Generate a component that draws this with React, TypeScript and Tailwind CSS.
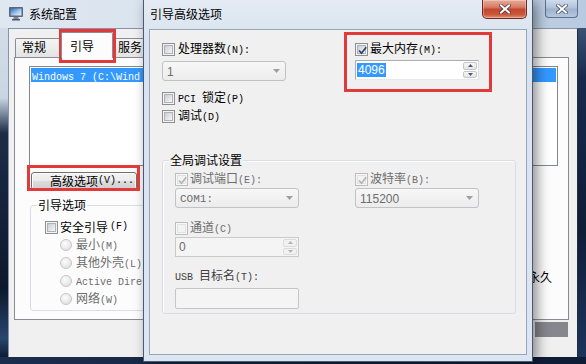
import React from "react";

const CJK = /[\u2e80-\u9fff\u3000-\u303f\uff00-\uffef]/;

function T({ s }: { s: string }) {
  const runs: { t: string; c: boolean }[] = [];
  for (const ch of s) {
    const c = CJK.test(ch);
    const last = runs[runs.length - 1];
    if (last && last.c === c) last.t += ch;
    else runs.push({ t: ch, c });
  }
  return (
    <>
      {runs.map((r, i) =>
        r.c ? (
          <span key={i} className="[font-family:'Noto_Sans_CJK_SC',sans-serif] text-[12px]">
            {r.t}
          </span>
        ) : (
          <span key={i} className="whitespace-pre [font-family:'Liberation_Mono',monospace] text-[10px]">
            {r.t}
          </span>
        )
      )}
    </>
  );
}

function Check({ checked = false, disabled = false }: { checked?: boolean; disabled?: boolean }) {
  return (
    <span
      className={`relative flex h-[13px] w-[13px] shrink-0 border p-[1px] ${
        disabled ? "border-[#bdbdbd] bg-[#f7f7f7]" : "border-[#8e8f8f] bg-[#f4f4f4]"
      }`}
    >
      <span
        className={`block h-full w-full border ${
          disabled
            ? "border-[#e2e2e2] bg-[#f3f3f3]"
            : "border-[#aeb2b8] bg-[linear-gradient(135deg,#c9cdd3,#f6f6f6)]"
        }`}
      />
      {checked && (
        <svg className="absolute left-[1px] top-[1px]" width="11" height="11" viewBox="0 0 11 11">
          <path
            d="M2 5.5L4.5 8.2L9.2 2.2"
            fill="none"
            stroke={disabled ? "#b4b4b4" : "#2d3f72"}
            strokeWidth="1.7"
          />
        </svg>
      )}
    </span>
  );
}

function Radio() {
  return (
    <span className="h-[12px] w-[12px] shrink-0 rounded-full border border-[#c6c6c6] bg-[radial-gradient(circle_at_40%_35%,#fdfdfd,#d9d9d9)]" />
  );
}

function Combo({ children }: { children: React.ReactNode }) {
  return (
    <div className="flex h-[20px] w-[124px] items-center rounded-[3px] border border-[#c0c2c5] bg-[linear-gradient(#f7f7f7,#ececec)] pl-[4px] pr-[5px] leading-[14px] text-[#6d6d6d]">
      <div className="flex-1">{children}</div>
      <svg width="7" height="4" viewBox="0 0 7 4">
        <path d="M0 0H7L3.5 4Z" fill="#9f9f9f" />
      </svg>
    </div>
  );
}

function Spin({ active = false, children }: { active?: boolean; children: React.ReactNode }) {
  const btn = active
    ? "border-[#c4c6c9] bg-[linear-gradient(#f8f8f8,#e4e4e4)]"
    : "border-[#dcdcdc] bg-[#f1f1f1]";
  const arrow = active ? "#4a5878" : "#b2b2b2";
  return (
    <div
      className={`flex h-[20px] w-[124px] border ${
        active ? "border-[#abadb3] border-b-[#e3e9ef] border-r-[#dbdfe6] bg-white" : "border-[#cacaca] bg-[#f4f4f4]"
      }`}
    >
      <div className="flex flex-1 items-center pl-[1px] leading-[14px]">{children}</div>
      <div className="flex w-[16px] flex-col gap-[1px] p-[1px]">
        <div className={`flex flex-1 items-center justify-center rounded-[2px] border ${btn}`}>
          <svg width="5" height="3" viewBox="0 0 5 3">
            <path d="M0 3H5L2.5 0Z" fill={arrow} />
          </svg>
        </div>
        <div className={`flex flex-1 items-center justify-center rounded-[2px] border ${btn}`}>
          <svg width="5" height="3" viewBox="0 0 5 3">
            <path d="M0 0H5L2.5 3Z" fill={arrow} />
          </svg>
        </div>
      </div>
    </div>
  );
}

function CloseX() {
  return (
    <svg width="12" height="10" viewBox="0 0 12 10">
      <path d="M2 1.5L10 8.5M10 1.5L2 8.5" stroke="#2b2f3a" strokeWidth="3.6" strokeLinecap="square" opacity="0.75" />
      <path d="M2 1.5L10 8.5M10 1.5L2 8.5" stroke="#ffffff" strokeWidth="2" strokeLinecap="square" />
    </svg>
  );
}

function MonitorIcon() {
  return (
    <svg width="16" height="15" viewBox="0 0 16 15" className="ml-[8px] mt-[6px] shrink-0">
      <defs>
        <linearGradient id="scr" x1="0" y1="0" x2="1" y2="1">
          <stop offset="0" stopColor="#2f6fc0" />
          <stop offset="0.6" stopColor="#a9cdf0" />
          <stop offset="1" stopColor="#e8f2fb" />
        </linearGradient>
      </defs>
      <rect x="1" y="1" width="14" height="10" rx="1" fill="#5c6778" />
      <rect x="2.5" y="2.5" width="11" height="7" fill="url(#scr)" />
      <path d="M6 11H10L11 13H5Z" fill="#7c8593" />
      <rect x="4" y="13" width="8" height="1.5" fill="#4f5966" />
    </svg>
  );
}

export default function App() {
  return (
    <div className="relative h-[364px] w-[586px] overflow-hidden bg-[#13223d] text-[12px] leading-[14px] text-black [font-family:'Noto_Sans_CJK_SC',sans-serif]">
      {/* Background window: 系统配置 */}
      <div className="absolute inset-0 flex flex-col">
        <div className="flex h-[28px] shrink-0 items-start bg-[linear-gradient(90deg,#dfe7f1,#d3dfec_60%,#b8cae0)]">
          <MonitorIcon />
          <span className="ml-[5px] mt-[7px]">系统配置</span>
          <div className="ml-auto mr-[8px] flex h-[18px] w-[33px] items-center justify-center rounded-b-[4px] border border-t-0 border-[#5d7090] bg-[linear-gradient(#cfdcec,#afc2db_48%,#9cb2d0_52%,#b6c8df)]">
            <CloseX />
          </div>
        </div>
        <div className="flex min-h-0 flex-1">
          <div className="w-[8px] bg-[linear-gradient(#d3dde9,#c9d5e3_70px,#1c2c48_105px,#0c182d_260px,#28466f_310px,#0f1c33)]" />
          <div className="flex w-[570px] flex-col border-x border-t border-[#8794a8] border-r-[#1f2d47] bg-[#f0f0f0]">
            {/* tabs */}
            <div className="ml-[6px] mt-[3px] flex h-[25px] items-end">
              <div className="flex h-[19px] w-[46px] items-start rounded-t-[2px] border border-b-0 border-[#898c95] bg-[linear-gradient(#f4f4f4,#e4e4e4)] pl-[6px] pt-[1px]">
                常规
              </div>
              <div className="relative z-10 -mb-[1px] flex h-[26px] w-[52px] items-start rounded-t-[2px] border border-b-0 border-[#898c95] bg-[#fcfcfc] pl-[8px] pt-[6px]">
                引导
              </div>
              <div className="flex h-[19px] w-[46px] items-start rounded-t-[2px] border border-b-0 border-l-0 border-[#898c95] bg-[linear-gradient(#f4f4f4,#e4e4e4)] pl-[5px] pt-[1px]">
                服务
              </div>
            </div>
            {/* tab panel */}
            <div className="ml-[5px] flex h-[263px] w-[555px] flex-col border border-[#898c95] bg-[#fcfcfc]">
              <div className="ml-[14px] mt-[8px] h-[100px] w-[529px] border border-[#828790] bg-white p-[1px]">
                <div className="h-[14px] whitespace-nowrap bg-[#3399ff] pl-[1px] text-white">
                  <T s="Windows 7 (C:\Wind" />
                </div>
              </div>
              <div className="ml-[16px] mt-[6px] flex h-[18px] w-[106px] items-center whitespace-nowrap rounded-[3px] border border-[#707070] bg-[linear-gradient(#f2f2f2,#ebebeb_50%,#dddddd_50%,#cfcfcf)] pl-[18px] shadow-[inset_0_0_0_1px_#fbfbfb]">
                <T s="高级选项(V)..." />
              </div>
              <div className="mt-[15px] flex">
                <div className="ml-[15px] flex h-[106px] w-[260px] flex-col rounded-[3px] border border-[#d5dfe5]">
                  <div className="-mt-[8px] ml-[6px] self-start bg-[#fcfcfc] px-[1px]">引导选项</div>
                  <div className="ml-[14px] mt-[6px] flex h-[18px] items-center gap-[2px] whitespace-nowrap">
                    <Check />
                    <T s="安全引导(F)" />
                  </div>
                  {["最小(M)", "其他外壳(L)", "Active Dire", "网络(W)"].map((s) => (
                    <div key={s} className="ml-[29px] flex h-[18px] items-center gap-[4px] whitespace-nowrap text-[#6d6d6d]">
                      <Radio />
                      <span>
                        <T s={s} />
                      </span>
                    </div>
                  ))}
                </div>
                <div className="flex-1 whitespace-nowrap pr-[16px] pt-[65px] text-right">永久</div>
              </div>
            </div>
            <div className="flex justify-end pr-[9px] pt-[2px]">
              <div className="h-[15px] w-[33px] bg-[#86868e]" />
            </div>
          </div>
          <div className="w-[8px] bg-[linear-gradient(#3a5273,#182a4b_50px,#0f1c36_200px,#1d355a)]" />
        </div>
        <div className="h-[7px] shrink-0 bg-[linear-gradient(90deg,#1b2d4d,#0f1c33)]" />
      </div>

      {/* Dialog: 引导高级选项 */}
      <div className="absolute left-[143px] top-0 flex h-[362px] w-[390px] flex-col border-x border-b border-[#4a5a73] bg-[linear-gradient(#e4ebf4,#d8e3ef_40px,#dbe6f2)] shadow-[4px_2px_12px_rgba(0,0,0,0.45)]">
        <div className="flex h-[29px] shrink-0 items-start">
          <span className="ml-[6px] mt-[7px]">引导高级选项</span>
          <div className="ml-auto mr-[5px] flex h-[19px] w-[45px] items-center justify-center rounded-b-[5px] border border-t-0 border-[#6d2a20] bg-[linear-gradient(#e8ab9b,#d77a64_40%,#c4472f_52%,#c9573a_80%,#e09273)] shadow-[inset_0_0_0_1px_rgba(255,255,255,0.3)]">
            <CloseX />
          </div>
        </div>
        <div className="flex min-h-0 flex-1 px-[5px]">
          <div className="flex w-[378px] flex-col border border-[#98a6ba] bg-[#f0f0f0] pl-[12px] pt-[13px]">
            <div className="flex">
              <div className="flex w-[193px] flex-col">
                <div className="flex h-[13px] items-center gap-[3px]">
                  <Check />
                  <span className="whitespace-nowrap">
                    <T s="处理器数(N):" />
                  </span>
                </div>
                <div className="mt-[5px]">
                  <Combo>
                    <span className="[font-family:'Liberation_Sans',sans-serif] text-[12px]">1</span>
                  </Combo>
                </div>
                <div className="mt-[11px] flex h-[13px] items-center gap-[3px]">
                  <Check />
                  <span className="whitespace-nowrap">
                    <T s="PCI 锁定(P)" />
                  </span>
                </div>
                <div className="mt-[5px] flex h-[13px] items-center gap-[3px]">
                  <Check />
                  <span className="whitespace-nowrap">
                    <T s="调试(D)" />
                  </span>
                </div>
              </div>
              <div className="flex flex-col">
                <div className="flex h-[13px] items-center gap-[2px]">
                  <Check checked />
                  <span className="whitespace-nowrap">
                    <T s="最大内存(M):" />
                  </span>
                </div>
                <div className="mt-[4px]">
                  <Spin active>
                    <span className="bg-[#3399ff] px-[1px] text-white [font-family:'Liberation_Sans',sans-serif] text-[12px]">
                      4096
                    </span>
                  </Spin>
                </div>
              </div>
            </div>

            <div className="mt-[37px] flex h-[154px] w-[354px] flex-col rounded-[3px] border border-[#d5dfe5] shadow-[inset_1px_1px_0_#ffffff]">
              <div className="-mt-[8px] ml-[6px] self-start bg-[#f0f0f0] px-[1px]">全局调试设置</div>
              <div className="mt-[6px] flex pl-[12px]">
                <div className="flex w-[180px] flex-col">
                  <div className="flex h-[13px] items-center gap-[2px] text-[#6d6d6d]">
                    <Check checked disabled />
                    <span className="whitespace-nowrap">
                      <T s="调试端口(E):" />
                    </span>
                  </div>
                  <div className="mt-[2px]">
                    <Combo>
                      <span className="[font-family:'Liberation_Mono',monospace] text-[11px]">COM1:</span>
                    </Combo>
                  </div>
                  <div className="mt-[14px] flex h-[13px] items-center gap-[2px] text-[#6d6d6d]">
                    <Check disabled />
                    <span className="whitespace-nowrap">
                      <T s="通道(C)" />
                    </span>
                  </div>
                  <div className="mt-[2px]">
                    <Spin>
                      <span className="pl-[2px] text-[#6d6d6d] [font-family:'Liberation_Sans',sans-serif] text-[12px]">0</span>
                    </Spin>
                  </div>
                  <div className="mt-[11px] whitespace-nowrap text-[#404040]">
                    <T s="USB 目标名(T):" />
                  </div>
                  <div className="mt-[3px] h-[21px] w-[124px] rounded-[2px] border border-[#c4c6c8] bg-[#f4f4f4]" />
                </div>
                <div className="flex flex-col">
                  <div className="flex h-[13px] items-center gap-[2px] text-[#6d6d6d]">
                    <Check checked disabled />
                    <span className="whitespace-nowrap">
                      <T s="波特率(B):" />
                    </span>
                  </div>
                  <div className="mt-[2px]">
                    <Combo>
                      <span className="[font-family:'Liberation_Sans',sans-serif] text-[12px]">115200</span>
                    </Combo>
                  </div>
                </div>
              </div>
            </div>
          </div>
        </div>
        <div className="h-[6px] shrink-0" />
      </div>

      {/* red annotation boxes */}
      <div className="absolute left-[59px] top-[29px] h-[34px] w-[57px] border-[3px] border-[#e23a3a]" />
      <div className="absolute left-[27px] top-[165px] h-[26px] w-[113px] border-[3px] border-[#e23a3a]" />
      <div className="absolute left-[344px] top-[32px] h-[60px] w-[148px] border-[3px] border-[#e23a3a]" />
    </div>
  );
}
